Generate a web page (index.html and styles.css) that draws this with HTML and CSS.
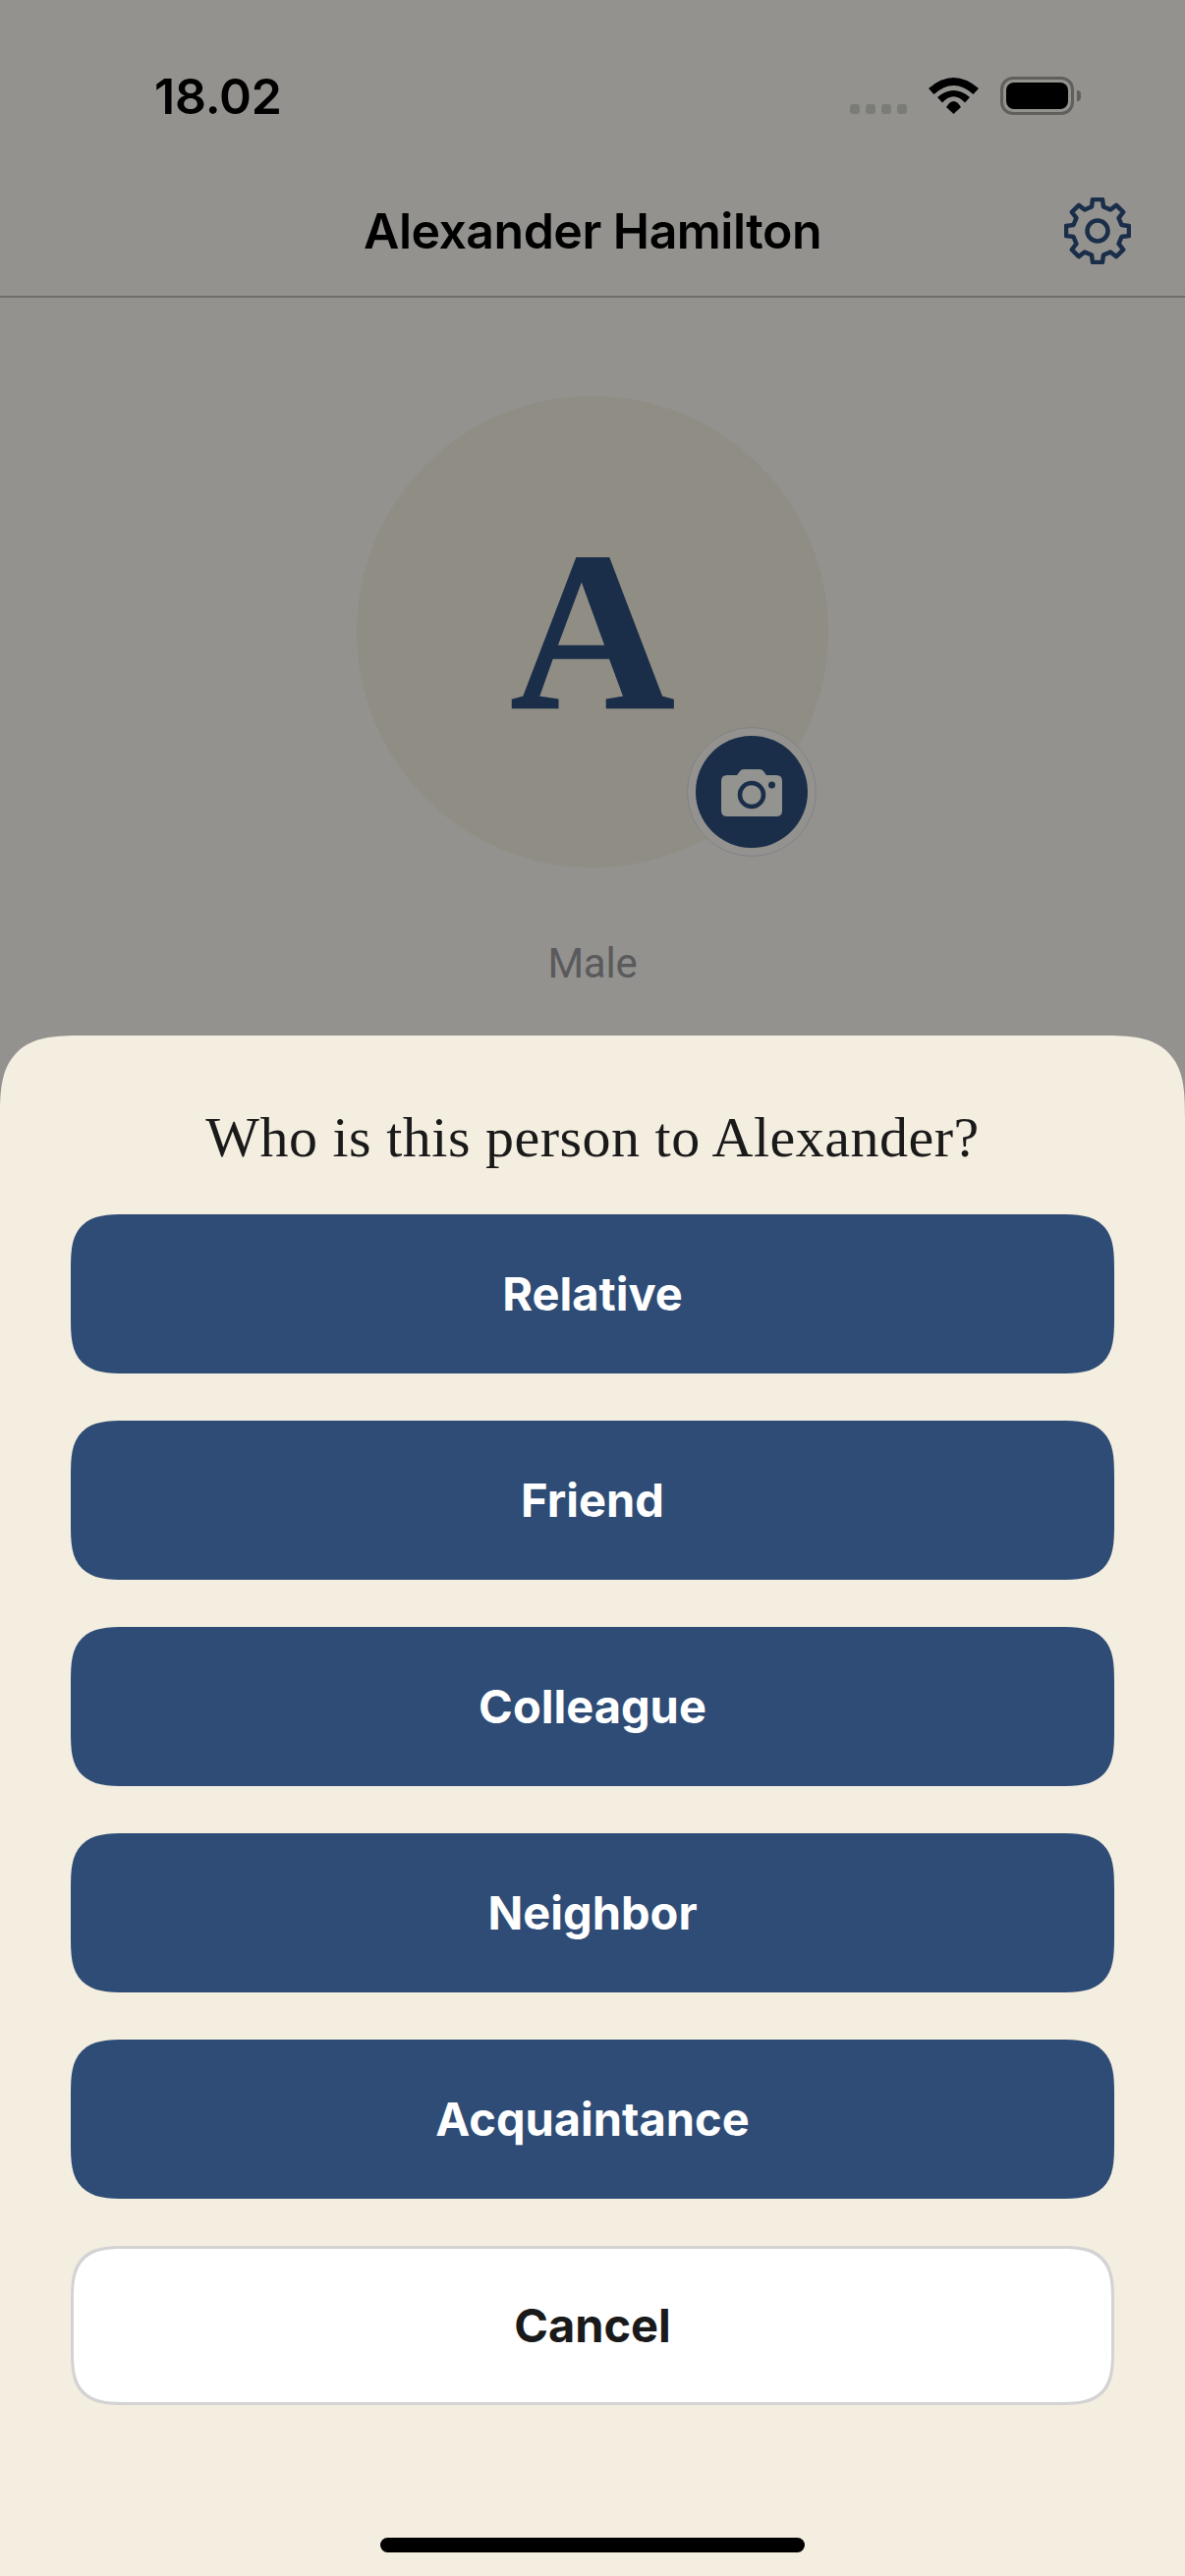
FILE: index.html
```
<!DOCTYPE html>
<html lang="en">
<head>
  <meta charset="UTF-8"/>
  <meta name="viewport" content="width=device-width, initial-scale=1.0"/>
  <title>Alexander Hamilton</title>
  <link rel="stylesheet" href="styles.css">
</head>
<body>
  <div class="page">
    <div class="status-bar">
      <span class="clock">18.02</span>
      <div class="status-icons">
        <div class="signal"><i></i><i></i><i></i><i></i></div>
        <svg class="wifi" viewBox="0 0 51 37" aria-hidden="true">
          <path d="M0 11Q25.5-11 51 11L45.5 17Q25.5-1 5.5 17Z"/>
          <path d="M9 20Q25.5 6 42 20L37 25.5Q25.5 13 14 25.5Z"/>
          <path d="M18 30Q25.5 18 33 30L25.5 37Z"/>
        </svg>
        <div class="battery"><div class="battery-fill"></div></div>
      </div>
    </div>

    <header class="nav">
      <h1>Alexander Hamilton</h1>
      <svg class="gear" viewBox="-34 -34 68 68" aria-hidden="true">
        <path d="M-6-24.5L-5-32L5-32L6-24.5L13.08-21.57L19.09-26.16L26.16-19.09L21.57-13.08L24.5-6L32-5L32 5L24.5 6L21.57 13.08L26.16 19.09L19.09 26.16L13.08 21.57L6 24.5L5 32L-5 32L-6 24.5L-13.08 21.57L-19.09 26.16L-26.16 19.09L-21.57 13.08L-24.5 6L-32 5L-32-5L-24.5-6L-21.57-13.08L-26.16-19.09L-19.09-26.16L-13.08-21.57Z"/>
        <circle r="10.5"/>
      </svg>
    </header>

    <section class="profile">
      <div class="avatar">
        <span class="avatar-letter">A</span>
        <div class="camera-btn">
          <svg class="camera" viewBox="0 0 62 48" aria-hidden="true">
            <path class="camera-body" d="M6 6H16L19 2Q20.500 0 23 0H39Q41.500 0 43 2L46 6H56Q62 6 62 12V42Q62 48 56 48H6Q0 48 0 42V12Q0 6 6 6Z"/>
            <circle class="camera-lens" cx="31" cy="26" r="12"/>
            <circle class="camera-dot" cx="51.500" cy="16" r="3.500"/>
          </svg>
        </div>
      </div>
      <p class="gender">Male</p>
    </section>
  </div>

  <div class="scrim"></div>

  <div class="sheet">
    <h2>Who is this person to Alexander?</h2>
    <div class="options">
      <button class="option">Relative</button>
      <button class="option">Friend</button>
      <button class="option">Colleague</button>
      <button class="option">Neighbor</button>
      <button class="option">Acquaintance</button>
      <button class="option cancel">Cancel</button>
    </div>
    <div class="home-bar"></div>
  </div>
</body>
</html>
```

FILE: styles.css
```
* { box-sizing: border-box; }
html, body { margin: 0; padding: 0; }
body {
  position: relative;
  width: 1206px;
  height: 2622px;
  overflow: hidden;
  font-family: Inter, "Noto Sans", Arial, sans-serif;
  color: #000;
}

.page {
  height: 100%;
  background: #f5f3ee;
}

/* status bar */
.status-bar {
  height: 118px;
  padding: 78px 113px 0 157px;
  display: flex;
  justify-content: space-between;
}
.clock {
  font-size: 50px;
  font-weight: 600;
  line-height: 40px;
  letter-spacing: -0.2px;
}
.status-icons {
  display: flex;
  align-items: flex-start;
  height: 39px;
}
.signal {
  display: flex;
  gap: 6px;
  margin-top: 28px;
  margin-right: 22px;
}
.signal i {
  width: 10px;
  height: 10px;
  border-radius: 3px;
  background: #cdcdc8;
}
.wifi {
  width: 51px;
  height: 37px;
  margin-top: 1px;
  margin-right: 22px;
}
.battery {
  position: relative;
  width: 75px;
  height: 39px;
  padding: 3px;
  border: 3px solid #9e9e9a;
  border-radius: 13px;
}
.battery-fill {
  height: 100%;
  background: #000;
  border-radius: 8px;
}
.battery:after {
  content: '';
  position: absolute;
  left: 75px;
  top: 11px;
  width: 4px;
  height: 11px;
  background: #9e9e9a;
  border-radius: 0 4px 4px 0;
}

/* nav */
.nav {
  height: 185px;
  padding: 83px 55px 0;
  display: grid;
  grid-template-columns: 68px 1fr 68px;
  align-items: start;
  border-bottom: 2px solid #b8b8af;
}
.nav h1 {
  grid-column: 2;
  margin: 9px 0 0;
  text-align: center;
  font-size: 50px;
  font-weight: 600;
  line-height: 50px;
  letter-spacing: -0.5px;
}
.gear {
  grid-column: 3;
  width: 68px;
  height: 68px;
  fill: none;
  stroke: #2d4d7b;
  stroke-width: 4.500;
  stroke-linejoin: round;
}

/* profile */
.profile {
  display: flex;
  flex-direction: column;
  align-items: center;
  padding-top: 100px;
}
.avatar {
  position: relative;
  width: 480px;
  height: 480px;
  border-radius: 50%;
  background: #efebdc;
  display: flex;
  align-items: center;
  justify-content: center;
}
.avatar-letter {
  padding-bottom: 2px;
  font-family: "Liberation Serif", Georgia, serif;
  font-weight: 700;
  font-size: 232px;
  line-height: 1;
  color: #2d4d7b;
  -webkit-text-stroke: 1.5px #2d4d7b;
}
.camera-btn {
  position: absolute;
  left: 336px;
  top: 337px;
  width: 132px;
  height: 132px;
  border-radius: 50%;
  border: 1px solid #d8d8e0;
  background: #f5f3ee;
  display: flex;
  align-items: center;
  justify-content: center;
}
.camera-btn:before {
  content: '';
  width: 114px;
  height: 114px;
  border-radius: 50%;
  background: #2d4d7b;
}
.camera {
  position: absolute;
  left: 34px;
  top: 42px;
  width: 62px;
  height: 48px;
}
.camera-body { fill: #f5f5ee; }
.camera-lens { fill: none; stroke: #2d4d7b; stroke-width: 4.500; }
.camera-dot { fill: #2d4d7b; }
.gender {
  margin: 73px 0 0;
  font-family: Roboto, Inter, sans-serif;
  font-size: 42px;
  line-height: 50px;
  letter-spacing: -0.2px;
  color: #969699;
}

/* dim layer */
.scrim {
  position: absolute;
  top: 0; left: 0; right: 0; bottom: 0;
  background: rgba(0,0,0,0.4);
}

/* bottom sheet */
.sheet {
  position: absolute;
  left: 0; right: 0; bottom: 0;
  height: 1568px;
  padding: 0 72px 24px;
  background: #f4eee0;
  border-radius: 84px 84px 0 0;
  corner-shape: superellipse(1.6);
  display: flex;
  flex-direction: column;
}
.sheet h2 {
  height: 182px;
  margin: 0;
  padding-top: 24px;
  display: flex;
  align-items: center;
  justify-content: center;
  font-family: "Liberation Serif", Georgia, serif;
  font-weight: 400;
  font-size: 58px;
  letter-spacing: 0.5px;
  color: #1a1a1a;
}
.options {
  display: flex;
  flex-direction: column;
  gap: 48px;
}
.option {
  height: 162px;
  padding: 0 0 2px;
  border: none;
  border-radius: 56px;
  corner-shape: superellipse(1.6);
  background: #2e4c75;
  color: #fff;
  font-family: inherit;
  font-size: 47px;
  font-weight: 700;
}
.cancel {
  background: #fff;
  border: 3px solid #d3d3d3;
  color: #1a1a1a;
}
.home-bar {
  width: 432px;
  height: 15px;
  margin: auto auto 0;
  background: #000;
  border-radius: 8px;
}
```
